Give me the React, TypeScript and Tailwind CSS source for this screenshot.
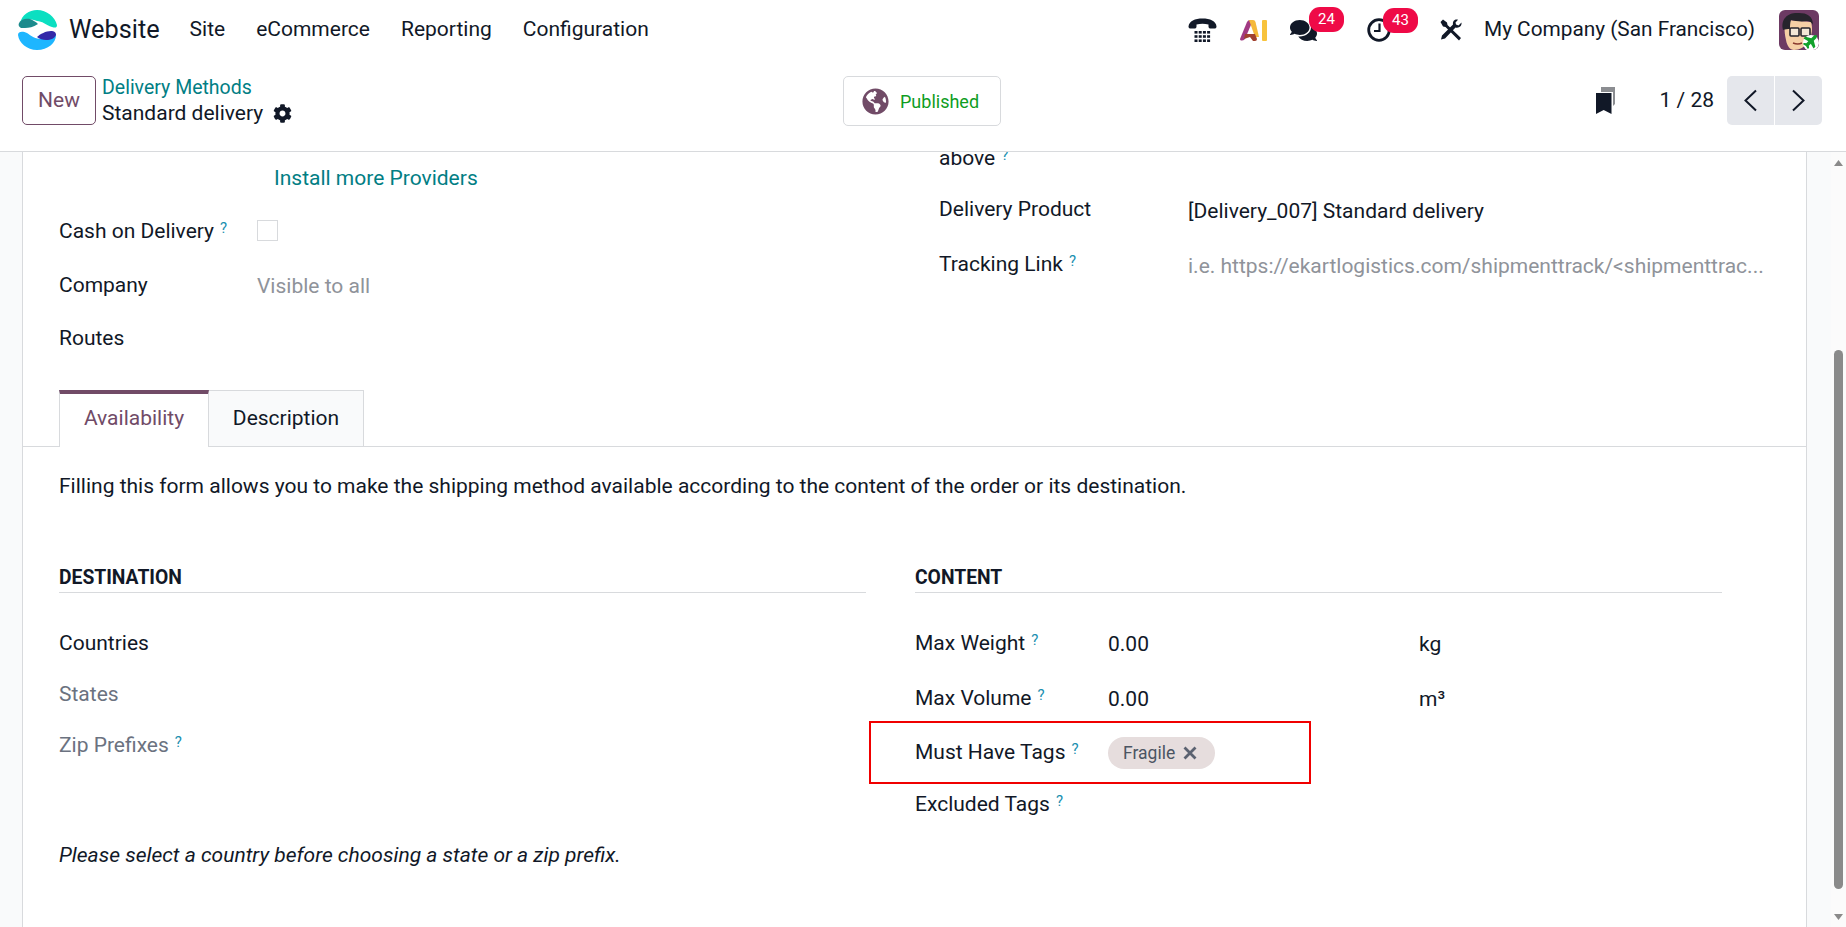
import React from "react";
import { FaCog, FaGlobeAmericas, FaComments, FaPlane } from "react-icons/fa";

const Help = () => (
  <sup className="ml-[6px] text-[15px] text-[#1a8fb0] leading-none relative -top-[5px]">?</sup>
);

const Logo = () => (
  <svg width="40" height="40" viewBox="0 0 40 40" className="shrink-0">
    <path d="M2 13C4 5 11 0 19 0C29 0 37 7 39 15C39 18 37 18 34 17C28 15 24 11 19 11C13 9 7 8 2 13z" fill="#0bdfc1" />
    <path d="M1 13C3 9 8 8 12 9C15 10 18 12 20 14C15 17 11 18 7 18L3 18C1 17 0 15 1 13z" fill="#1c8a8c" />
    <path d="M0 25C0 21 5 21 9 23C13 26 18 29 23 29C28 29 34 26 38 25C38 33 30 40 19 40C9 40 1 33 0 25z" fill="#1eb6ff" />
    <path d="M19 27C22 24 28 21 33 21C36 21 38 22 38 25C37 28 33 30 28 30C25 30 21 29 19 27z" fill="#3429a8" />
  </svg>
);

const Phone = () => (
  <svg width="29" height="25" viewBox="0 0 29 25">
    <path d="M0.5 8.5C1 3 7 0.5 14.5 0.5S28 3 28.5 8.5c0 1.5-1 2-2 2h-4c-1 0-2-.5-2-2V6.5c-4-1-8-1-12 0v2c0 1.5-1 2-2 2h-4c-1 0-2-.5-2-2z" fill="#111827" />
    <g fill="#111827">
      {[0, 1, 2].map((r) =>
        [0, 1, 2, 3].map((c) => <rect key={r + "-" + c} x={6.5 + c * 4.2} y={13 + r * 4.2} width="3" height="2.6" />)
      )}
    </g>
  </svg>
);

const Ai = () => (
  <svg width="27" height="21" viewBox="0 0 27 21">
    <path d="M0 19L7 2Q8 0 10 0L13 0L5 19Q3 21 1 20.5Q0 20 0 19z" fill="#a13a82" />
    <path d="M9 0L13 0Q15 0 15.5 2L19 17L15 17z" fill="#f5b93a" />
    <path d="M5 14L15 14L17 19Q17 21 15 21L13 21L10 17L4 19z" fill="#a0402f" />
    <rect x="22" y="0" width="5" height="21" rx="1" fill="#f8c33c" />
  </svg>
);

const Clock = () => (
  <svg width="24" height="24" viewBox="0 0 24 24">
    <circle cx="12" cy="12" r="10.3" fill="none" stroke="#111827" strokeWidth="2.8" />
    <path d="M12.5 5.5v7.5H7" fill="none" stroke="#111827" strokeWidth="2.2" />
  </svg>
);

const Tools = () => (
  <svg width="22" height="22" viewBox="0 0 22 22" fill="#111827">
    <path d="M0.5 3 L3 0.5 L7 3.5 L7.5 6 L21 19 L19 21.5 L5.5 8 L3 7.5z" />
    <path d="M21.5 3.5 L18.5 6.5 L16 5.5 L15.5 3.5 L18 0.8 C15 0 12.5 2 13 5.5 L2 16.5 L1 20.5 L5 19.5 L15.5 8.5 C19 9.5 22 7 21.5 3.5z" />
  </svg>
);

const Bookmarks = () => (
  <svg width="20" height="27" viewBox="0 0 20 27">
    <path d="M5 0h14v17l-2 2V5H5z" fill="#8b8d91" />
    <path d="M0 6h15.5v21L7.7 23 0 27z" fill="#111827" />
  </svg>
);

const Avatar = () => (
  <div className="relative w-[40px] h-[40px] shrink-0">
    <svg width="40" height="40" viewBox="0 0 40 40" className="rounded-[6px]">
      <rect width="40" height="40" fill="#6c3a63" />
      <path d="M7 30C5 21 5 14 8 10l24 2c2 6 1 13-2 18-3 7-10 10-15 10-4 0-7-4-8-10z" fill="#f6cfa5" />
      <path d="M4 20C1 8 10 2 20 3c8 0 14 3 14 12-1-2-3-4-6-4-6 1-12 0-16-1-1 3-1 6-1 9-2 0-5 0-7 1z" fill="#26242c" />
      <rect x="11" y="18" width="9" height="8" rx="1" fill="#f4e7d6" stroke="#26242c" strokeWidth="1.6" />
      <rect x="22" y="18" width="9" height="8" rx="1" fill="#f4e7d6" stroke="#26242c" strokeWidth="1.6" />
      <path d="M14 33q5 2 9 0" stroke="#8a3a2e" strokeWidth="1.5" fill="none" />
      <circle cx="32" cy="33" r="8" fill="#ffffff" />
    </svg>
    <FaPlane size={16} color="#12a12c" className="absolute right-[0px] bottom-[1px] -rotate-45" />
  </div>
);

const Badge = ({ n, left }: { n: number; left: string }) => (
  <span className={"absolute top-[-10px] h-[25px] w-[35px] rounded-[11px] bg-[#ef0a47] text-white text-[15px] flex items-center justify-center leading-none " + left}>
    {n}
  </span>
);

const Row = ({
  label,
  help,
  h,
  labelW,
  children,
}: {
  label: string;
  help?: boolean;
  h: string;
  labelW: string;
  children?: React.ReactNode;
}) => (
  <div className={"flex items-center " + h}>
    <div className={"shrink-0 whitespace-nowrap " + labelW}>
      {label}
      {help && <Help />}
    </div>
    {children}
  </div>
);

export default function App() {
  return (
    <div className="h-screen w-full overflow-hidden flex flex-col bg-white text-[#111827] text-[21px] font-['Roboto',sans-serif]">
      {/* navbar */}
      <header className="h-[60px] shrink-0 flex items-center pl-[18px] pr-[27px]">
        <Logo />
        <span className="ml-[11px] text-[25.3px] leading-none">Website</span>
        <nav className="ml-[30px] flex gap-[31px]">
          <span>Site</span>
          <span>eCommerce</span>
          <span>Reporting</span>
          <span>Configuration</span>
        </nav>
        <div className="ml-auto flex items-center">
          <Phone />
          <span className="ml-[23px] flex"><Ai /></span>
          <span className="relative ml-[23px] flex w-[27px]">
            <FaComments size={27} color="#111827" />
            <Badge n={24} left="left-[19px]" />
          </span>
          <span className="relative ml-[50px] flex w-[24px]">
            <Clock />
            <Badge n={43} left="left-[16px]" />
          </span>
          <span className="ml-[49px] flex"><Tools /></span>
          <span className="ml-[22px] text-[20.8px] whitespace-nowrap">My Company (San Francisco)</span>
          <span className="ml-[24px]"><Avatar /></span>
        </div>
      </header>

      {/* control panel */}
      <div className="h-[92px] shrink-0 border-b border-[#d8dadd] flex items-start pl-[22px] pr-[24px] pt-[16px]">
        <button className="h-[49px] w-[74px] rounded-[5px] border border-[#714b67] text-[#714b67]">New</button>
        <div className="ml-[6px] w-[741px] shrink-0 flex flex-col">
          <span className="text-[#017e84] text-[19.5px] leading-[25px] -mt-[1px]">Delivery Methods</span>
          <span className="flex items-center leading-[26px]">
            Standard delivery
            <FaCog size={19} className="ml-[10px]" />
          </span>
        </div>
        <div className="h-[50px] w-[158px] rounded-[5px] border border-[#d8dadd] flex items-center pl-[18px] shrink-0 text-[18px]">
          <FaGlobeAmericas size={27} color="#714b67" />
          <span className="ml-[11px] text-[#0f9d1f]">Published</span>
        </div>
        <div className="ml-auto flex items-center h-[49px]">
          <Bookmarks />
          <span className="ml-[44px]">1 / 28</span>
          <div className="ml-[13px] flex h-[49px] rounded-[5px] bg-[#e5e7ec] overflow-hidden">
            <span className="w-[48px] flex items-center justify-center border-r border-white">
              <svg width="15" height="23" viewBox="0 0 15 23"><path d="M13 1.5L2.5 11.5L13 21.5" fill="none" stroke="#111827" strokeWidth="2" /></svg>
            </span>
            <span className="w-[47px] flex items-center justify-center">
              <svg width="15" height="23" viewBox="0 0 15 23"><path d="M2 1.5L12.5 11.5L2 21.5" fill="none" stroke="#111827" strokeWidth="2" /></svg>
            </span>
          </div>
        </div>
      </div>

      {/* main */}
      <div className="flex-1 min-h-0 flex bg-[#f9fafb]">
        <div className="w-[22px] shrink-0" />
        <main className="w-[1785px] shrink-0 bg-white border-x border-[#d8dadd] overflow-hidden">
          {/* top form */}
          <div className="flex">
            <div className="w-[916px] shrink-0 pl-[36px]">
              <div className="h-[54px] flex items-center pl-[215px] text-[#017e84]">Install more Providers</div>
              <Row label="Cash on Delivery" help h="h-[51px]" labelW="w-[198px]">
                <span className="h-[21px] w-[21px] border border-[#d8dadd] mb-[3px]" />
              </Row>
              <Row label="Company" h="h-[57px]" labelW="w-[198px]">
                <span className="text-[#8f939a] mt-[3px]">Visible to all</span>
              </Row>
              <Row label="Routes" h="h-[50px]" labelW="w-[198px]" />
            </div>
            <div className="flex-1 -mt-[19px]">
              <Row label="above" help h="h-[52px]" labelW="w-[249px]" />
              <Row label="Delivery Product" h="h-[50px]" labelW="w-[249px]">
                <span className="mt-[4px]">[Delivery_007] Standard delivery</span>
              </Row>
              <Row label="Tracking Link" help h="h-[60px]" labelW="w-[249px]">
                <span className="text-[#8f939a] whitespace-nowrap mt-[4px]">i.e. https://ekartlogistics.com/shipmenttrack/&lt;shipmenttrac...</span>
              </Row>
            </div>
          </div>

          {/* tabs */}
          <div className="mt-[26px] flex pl-[36px] border-b border-[#d8dadd] h-[57px]">
            <div className="w-[150px] h-[57px] pb-[4px] bg-white border-x border-[#d8dadd] border-t-4 border-t-[#714b67] flex items-center justify-center text-[#714b67]">Availability</div>
            <div className="w-[155px] h-[56px] bg-[#f9fafb] border-r border-t border-[#d8dadd] flex items-center justify-center">Description</div>
          </div>

          <p className="mt-[26px] pl-[36px] leading-[26px] whitespace-nowrap">
            Filling this form allows you to make the shipping method available according to the content of the order or its destination.
          </p>

          {/* groups */}
          <div className="mt-[63px] pl-[36px] flex gap-[49px]">
            <section className="w-[807px]">
              <h3 className="font-bold text-[19.3px] leading-[32px] border-b border-[#d8dadd] h-[31px]">DESTINATION</h3>
              <div className="mt-[26px] flex flex-col">
                <div className="h-[50px] flex items-center">Countries</div>
                <div className="h-[51px] flex items-center text-[#6b7280]">States</div>
                <div className="h-[51px] flex items-center text-[#6b7280]">
                  <span>Zip Prefixes<Help /></span>
                </div>
              </div>
              <p className="mt-[71px] italic leading-[26px]">Please select a country before choosing a state or a zip prefix.</p>
            </section>
            <section className="w-[807px]">
              <h3 className="font-bold text-[19.3px] leading-[32px] border-b border-[#d8dadd] h-[31px]">CONTENT</h3>
              <div className="mt-[23px] flex flex-col">
                <Row label="Max Weight" help h="h-[56px]" labelW="w-[193px]">
                  <span className="w-[311px] mt-[1px]">0.00</span>
                  <span className="mt-[1px]">kg</span>
                </Row>
                <Row label="Max Volume" help h="h-[54px]" labelW="w-[193px]">
                  <span className="w-[311px] mt-[1px]">0.00</span>
                  <span className="mt-[1px]">m³</span>
                </Row>
                <div className="relative">
                  <div className="absolute -left-[46px] -top-[5px] w-[442px] h-[63px] border-2 border-[#f00000]" />
                  <Row label="Must Have Tags" help h="h-[54px]" labelW="w-[193px]">
                    <span className="h-[32px] w-[107px] rounded-full bg-[#e6dddd] flex items-center pl-[15px] text-[#4b5563] text-[17.5px]">
                      Fragile
                      <svg width="14" height="14" viewBox="0 0 14 14" className="ml-[8px]">
                        <path d="M1.5 1.5l11 11M12.5 1.5l-11 11" stroke="#5b6270" strokeWidth="2.8" />
                      </svg>
                    </span>
                  </Row>
                </div>
                <Row label="Excluded Tags" help h="h-[50px]" labelW="w-[193px]" />
              </div>
            </section>
          </div>
        </main>
        {/* scrollbar */}
        <div className="w-[24px] shrink-0" />
        <div className="w-[15px] shrink-0 bg-[#fbfbfb] relative">
          <svg width="9" height="6" viewBox="0 0 9 6" className="absolute left-[3px] top-[8px]"><path d="M4.5 0l4.5 6H0z" fill="#8a8a8a" /></svg>
          <div className="absolute left-[3px] top-[198px] h-[539px] w-[9px] rounded-full bg-[#8a8a8a]" />
          <svg width="9" height="6" viewBox="0 0 9 6" className="absolute left-[3px] bottom-[7px]"><path d="M4.5 6L9 0H0z" fill="#8a8a8a" /></svg>
        </div>
      </div>
    </div>
  );
}
